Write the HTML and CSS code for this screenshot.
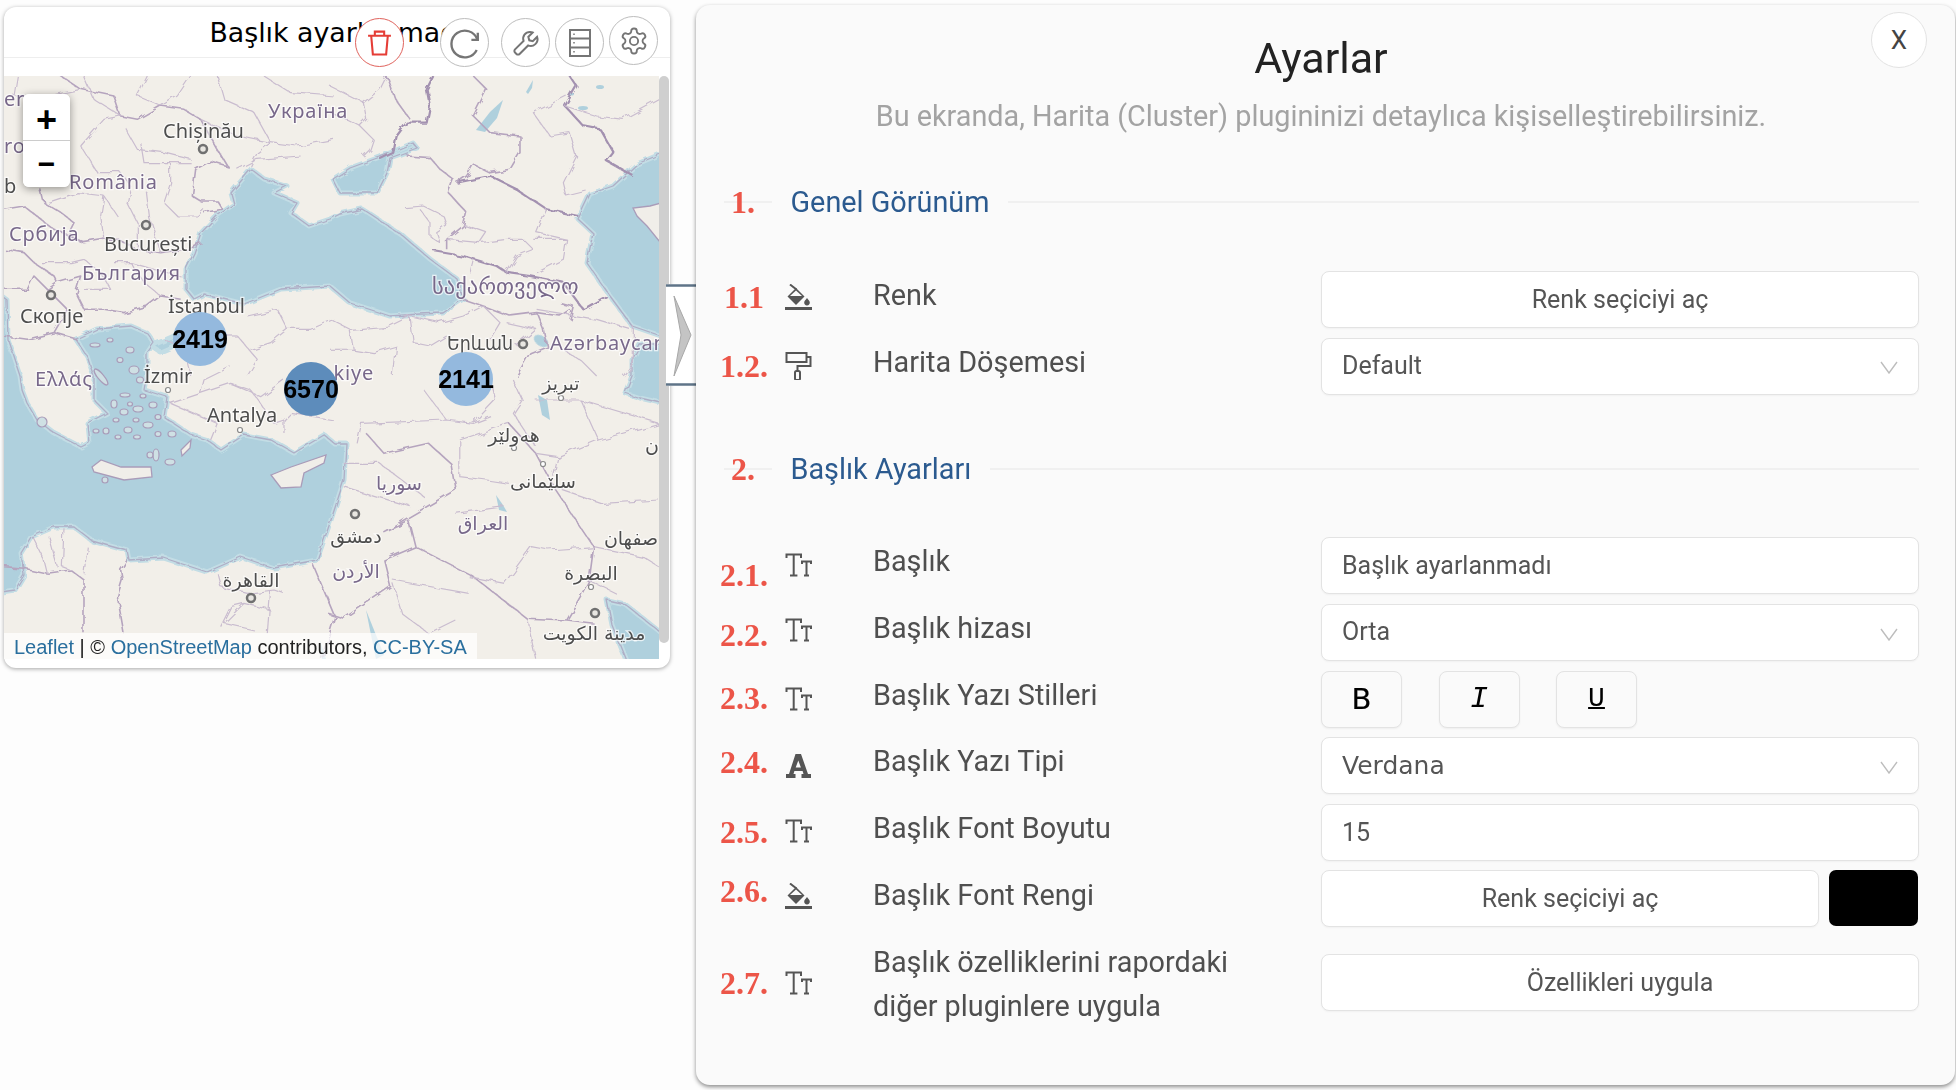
FILE: index.html
```html
<!DOCTYPE html>
<html lang="tr">
<head>
<meta charset="utf-8">
<title>Ayarlar</title>
<link rel="stylesheet" href="styles.css">
</head>
<body>
<svg class="defs" width="0" height="0" aria-hidden="true">
  <defs>
    <filter id="rough" x="-5%" y="-5%" width="110%" height="110%">
      <feTurbulence type="fractalNoise" baseFrequency="0.09" numOctaves="2" seed="4" result="n"/>
      <feDisplacementMap in="SourceGraphic" in2="n" scale="7"/>
      <feGaussianBlur stdDeviation="0.35"/>
    </filter>
    <filter id="coast" x="-5%" y="-5%" width="110%" height="110%">
      <feTurbulence type="fractalNoise" baseFrequency="0.1" numOctaves="2" seed="9" result="n"/>
      <feDisplacementMap in="SourceGraphic" in2="n" scale="5"/>
      <feGaussianBlur stdDeviation="0.3"/>
    </filter>
    <filter id="soft"><feGaussianBlur stdDeviation="0.35"/></filter>
    <path id="black-sea" d="M251 169L231 193 234 204 217 216 201 233 194 253 186 269 186 289 194 299 204 294 244 304 281 289 330 286 350 303 390 316 420 314 443 313 463 299 457 279 430 259 403 236 373 216 362 209 340 214 330 219 309 226 291 213 297 203 274 193 287 186 264 179z"/>
    <path id="azov" d="M333 179L350 168 380 157 413 143 417 148 390 158 387 173 377 193 340 193z"/>
    <path id="caspian" d="M670 150L637 164 613 186 590 194 578 219 593 233 587 263 610 296 632 326 670 339z"/>
    <path id="caspian-s" d="M670 345L640 345 632 360 632 376 625 393 640 398 670 405z"/>
    <path id="marmara" d="M151 346L181 333 188 340 160 352z"/>
    <path id="med" d="M-6 593L15 590 24 575 21 553 31 537 54 527 74 527 91 540 127 550 129 560 164 558 207 572 241 557 274 568 317 560 330 523 344 480 346 443 334 443 324 435 294 453 271 440 244 435 221 450 207 440 191 435 164 417 167 397 144 390 147 373 147 353 154 343 147 333 131 326 97 329 76 339 87 356 94 377 94 400 107 413 87 423 89 443 81 447 54 433 37 420 27 403 22 390 20 376 8 340 7 300 -6 290z"/>
    <path id="gulf" d="M607 600L625 604 670 640 670 670 630 670 612 625z"/>
    <symbol id="i-fill" viewBox="0 0 27 26">
      <path d="M5 0.5l6.5 5" fill="none" stroke="#555" stroke-width="2"/>
      <path d="M11 4l8.5 8.5L11 21 2.5 12.5z" fill="#555"/>
      <path d="M11 6.500l6 5.500H5z" fill="#fafafa"/>
      <path d="M22 14c1.600 2 2.800 3.300 2.800 4.600a2.800 2.800 0 0 1-5.600 0c0-1.300 1.200-2.600 2.800-4.600z" fill="#555"/>
      <rect x="0" y="23" width="27" height="3" fill="#555"/>
    </symbol>
    <symbol id="i-roller" viewBox="0 0 26 28">
      <rect x="1" y="1" width="20" height="9" fill="none" stroke="#555" stroke-width="2"/>
      <path d="M21 5h4v9H12v5" fill="none" stroke="#555" stroke-width="2"/>
      <rect x="9.500" y="19" width="5" height="9" rx="1.500" fill="none" stroke="#555" stroke-width="2"/>
    </symbol>
    <symbol id="i-tt" viewBox="0 0 27 24">
      <path d="M1.500 5V1.500h14.500V5M8.700 1.500V22.500M5 22.500h7.400" fill="none" stroke="#555" stroke-width="2"/>
      <path d="M17 11V8.500h9V11M21.500 8.500V22.500M19 22.500h5" fill="none" stroke="#555" stroke-width="2"/>
    </symbol>
    <symbol id="i-a" viewBox="0 0 27 24">
      <path fill="#555" fill-rule="evenodd" d="M10.500 0h5.500l7 20h3v4h-9.500v-4h2l-.9-3H9.400l-.9 3h2v4H1v-4h3zM13.300 6.500L10.700 13.500h5.200z"/>
    </symbol>
  </defs>
</svg>

<main class="page">
  <section class="map-card">
    <header class="map-head">
      <h2 class="map-title">Başlık ayarlanmadı</h2>
    </header>
    <div class="tools">
      <button class="tool tool-del" aria-label="Sil">
        <svg viewBox="0 0 26 26" width="27" height="27"><path d="M2 6.500h22M8.500 6.500V2.500h9v4M5 6.500l1.600 18h12.800L21 6.500" fill="none" stroke="#e53d36" stroke-width="2"/></svg>
      </button>
      <button class="tool tool-refresh" aria-label="Yenile">
        <svg viewBox="0 0 30 30" width="32" height="32"><path d="M26.500 11.500A12.500 12.500 0 1 0 26 21.500" fill="none" stroke="#757575" stroke-width="2.200"/><path d="M27 5.500v6.500h-6" fill="none" stroke="#757575" stroke-width="2.200"/></svg>
      </button>
      <button class="tool tool-wrench" aria-label="Araçlar">
        <svg viewBox="0 0 24 24" width="28" height="28"><path d="M15.500 2.500a5.800 5.800 0 0 0-5.600 7.700L2.600 17.500a1.900 1.900 0 0 0 0 2.700l1.200 1.200a1.900 1.900 0 0 0 2.700 0l7.300-7.300a5.800 5.800 0 0 0 7.700-7.300l-3.700 3.700-3-.8-.8-3 3.700-3.700a5.800 5.800 0 0 0-2.200-.5z" fill="none" stroke="#757575" stroke-width="1.700"/></svg>
      </button>
      <button class="tool tool-table" aria-label="Veri">
        <svg viewBox="0 0 22 28" width="22" height="28"><rect x="1" y="1" width="20" height="26" fill="none" stroke="#757575" stroke-width="2"/><path d="M1 9.500h20M1 18.500h20" stroke="#757575" stroke-width="2"/><path d="M5 4.500v1.500M5 13v1.500M5 22v1.500" stroke="#757575" stroke-width="1.500"/></svg>
      </button>
      <button class="tool tool-gear" aria-label="Ayarlar">
        <svg viewBox="0 0 24 24" width="30" height="30"><path d="M12.220 2h-.44a2 2 0 0 0-2 2v.18a2 2 0 0 1-1 1.730l-.43.25a2 2 0 0 1-2 0l-.15-.08a2 2 0 0 0-2.730.73l-.22.38a2 2 0 0 0 .73 2.730l.15.1a2 2 0 0 1 1 1.720v.51a2 2 0 0 1-1 1.740l-.15.09a2 2 0 0 0-.73 2.730l.22.38a2 2 0 0 0 2.730.73l.15-.08a2 2 0 0 1 2 0l.43.25a2 2 0 0 1 1 1.730V20a2 2 0 0 0 2 2h.44a2 2 0 0 0 2-2v-.18a2 2 0 0 1 1-1.730l.43-.25a2 2 0 0 1 2 0l.15.08a2 2 0 0 0 2.730-.73l.22-.39a2 2 0 0 0-.73-2.730l-.15-.08a2 2 0 0 1-1-1.740v-.5a2 2 0 0 1 1-1.740l.15-.09a2 2 0 0 0 .73-2.730l-.22-.38a2 2 0 0 0-2.730-.73l-.15.08a2 2 0 0 1-2 0l-.43-.25a2 2 0 0 1-1-1.730V4a2 2 0 0 0-2-2z" fill="none" stroke="#757575" stroke-width="1.500"/><circle cx="12" cy="12" r="3.300" fill="none" stroke="#757575" stroke-width="1.500"/></svg>
      </button>
    </div>
    <div class="map-body">
      <div class="map">
        <svg class="map-svg" viewBox="4 76 655 583" width="655" height="583">
          <rect x="4" y="76" width="655" height="583" fill="#f2efe9"/>

          <!-- water -->
          <g class="sea" filter="url(#coast)">
            <use href="#black-sea"/><use href="#azov"/><use href="#caspian"/><use href="#caspian-s"/><use href="#marmara"/><use href="#med"/><use href="#gulf"/>
          </g>
          <g class="sea-plain" filter="url(#soft)">
            <path d="M476 130L490 112 503 100 497 118 485 132z"/>
            <path d="M526 92L533 80 532 88 528 94z"/>
            <ellipse cx="583" cy="108" rx="5" ry="2"/>
            <ellipse cx="600" cy="87" rx="4" ry="2"/>
            <ellipse cx="571" cy="94" rx="3" ry="1.500"/>
            <ellipse cx="541" cy="341" rx="8" ry="5" transform="rotate(35 541 341)"/>
            <path d="M538 395L547 400 550 420 542 415z"/>
            <path d="M496 495L503 505 507 512 499 510z"/>
            <path d="M366 610L372 625 384 655 376 659 370 630z"/>
            <path d="M320 640L326 659 322 659z"/>
          </g>
          <g class="coast" filter="url(#coast)">
            <use href="#black-sea"/><use href="#azov"/><use href="#caspian"/><use href="#caspian-s"/><use href="#med"/><use href="#gulf"/>
          </g>

          <!-- islands -->
          <g class="isle" filter="url(#soft)">
            <path d="M92 467L101 460 121 467 151 467 152 477 124 480 94 472z"/>
            <path d="M271 475L291 467 326 455 324 463 304 473 301 487 281 488z"/>
            <path d="M181 450L191 440 190 448 182 456z"/>
            <path d="M637 216L633 208 650 206 668 201 668 252 647 226z"/>
          </g>
          <g class="islets" filter="url(#soft)">
            <ellipse cx="101" cy="377" rx="3" ry="10" transform="rotate(-40 101 377)"/>
            <ellipse cx="134" cy="370" rx="5" ry="4"/>
            <ellipse cx="130" cy="350" rx="4" ry="3"/>
            <ellipse cx="125" cy="395" rx="5" ry="2"/>
            <ellipse cx="114" cy="404" rx="3" ry="4"/>
            <ellipse cx="124" cy="412" rx="4" ry="3"/>
            <ellipse cx="138" cy="409" rx="5" ry="3"/>
            <ellipse cx="153" cy="405" rx="4" ry="3"/>
            <ellipse cx="106" cy="431" rx="3" ry="3"/>
            <ellipse cx="128" cy="430" rx="4" ry="3"/>
            <ellipse cx="148" cy="425" rx="5" ry="3"/>
            <ellipse cx="172" cy="434" rx="4" ry="3"/>
            <ellipse cx="156" cy="455" rx="3" ry="6"/>
            <ellipse cx="170" cy="462" rx="5" ry="3"/>
            <ellipse cx="42" cy="422" rx="5" ry="5"/>
            <ellipse cx="105" cy="480" rx="3" ry="3"/>
            <ellipse cx="96" cy="431" rx="3" ry="2"/>
            <ellipse cx="116" cy="420" rx="3" ry="2"/>
            <ellipse cx="136" cy="420" rx="3" ry="2"/>
            <ellipse cx="158" cy="417" rx="3" ry="2.500"/>
            <ellipse cx="118" cy="437" rx="3" ry="2"/>
            <ellipse cx="137" cy="437" rx="3.500" ry="2"/>
            <ellipse cx="158" cy="434" rx="3" ry="2.500"/>
            <ellipse cx="143" cy="396" rx="3" ry="2"/>
            <ellipse cx="130" cy="404" rx="2.500" ry="2"/>
            <ellipse cx="150" cy="455" rx="3" ry="3"/>
            <ellipse cx="140" cy="380" rx="3.500" ry="3"/>
            <ellipse cx="120" cy="360" rx="3" ry="2.500"/>
            <ellipse cx="95" cy="345" rx="5" ry="2"/>
            <ellipse cx="110" cy="340" rx="3" ry="2"/>
          </g>

          <!-- borders -->
          <g class="borders" filter="url(#rough)">
            <g transform="translate(4 76) scale(.3333)">
              <polyline points="170,0 230,40 330,60 350,120 400,130 470,90 540,100 590,130 640,220 670,270 620,255 575,280 565,360 590,375 640,375 655,400 600,410"/>
              <polyline points="200,480 240,500 300,490 340,490 400,520 470,530 540,520 590,500"/>
              <polyline points="110,340 120,380 170,410 210,440 190,480 240,500"/>
              <polyline points="160,620 230,600 215,650 240,700 300,700 360,710 430,690 470,660 530,670"/>
              <polyline points="0,520 60,530 90,560 150,600 160,620 130,640 90,600 70,640 0,640"/>
              <polyline points="0,400 60,390 110,430 150,460 200,480"/>
              <polyline points="130,640 190,700 150,770 70,790 0,780"/>
              <polyline points="150,770 220,790"/>
              <polyline class="thin" points="130,380 220,350 300,360 340,420"/>
              <polyline class="thin" points="300,360 290,420 300,490"/>
              <polyline class="thin" points="380,330 370,380 400,440 400,520"/>
              <polyline class="thin" points="430,350 440,430 470,530"/>
              <polyline class="thin" points="480,380 520,420 580,420 600,400"/>
              <polyline class="thin" points="500,260 560,260"/>
              <polyline class="thin" points="360,150 400,220 480,230 560,250"/>
              <polyline class="thin" points="410,200 420,260 500,260 500,320 480,380"/>
              <polyline class="thin" points="230,210 280,290 350,290 380,330"/>
              <polyline class="thin" points="230,210 300,130 350,120"/>
              <polyline class="thin" points="130,60 230,40"/>
              <polyline class="thin" points="640,0 660,70 750,110 800,200 760,230 740,270"/>
              <polyline class="thin" points="560,0 520,60 470,90"/>
              <polyline class="thin" points="780,0 860,50 990,60"/>
              <polyline class="thin" points="800,200 880,210 990,190"/>
              <polyline class="thin" points="700,280 760,250 890,240"/>
              <polyline class="thin" points="730,720 820,700 850,760 800,800 740,820"/>
              <polyline class="thin" points="850,760 920,760 990,730"/>
              <polyline class="thin" points="700,780 760,850 730,900"/>
              <polyline class="thin" points="480,790 540,820 560,900"/>
              <polyline class="thin" points="240,550 290,590 320,640 240,640"/>
              <polyline class="thin" points="380,560 420,620 470,660"/>
              <polyline class="thin" points="40,0 30,60 130,60"/>
              <polyline class="thin" points="240,0 270,70 350,120"/>
              <polyline class="thin" points="430,0 400,60 470,90"/>
              <polyline class="thin" points="590,130 700,180 800,200"/>
              <polyline class="thin" points="110,560 200,560 240,550"/>
              <polyline class="thin" points="330,560 380,560 450,580 530,600"/>
              <polyline class="thin" points="640,780 700,780"/>
            </g>
            <g transform="translate(330 76) scale(.3333)">
              <polyline class="thick" points="310,0 290,40 300,90 290,140 230,140 200,180 190,230 150,250"/>
              <polyline points="170,0 190,60 240,130"/>
              <polyline class="thin" points="0,30 60,60 100,80 150,40 170,0"/>
              <polyline class="thin" points="100,80 110,130 90,150 130,190 120,220 100,240"/>
              <polyline class="thin" points="0,110 50,130 90,150"/>
              <polyline points="230,240 300,245 330,280 370,310 355,350 410,410 400,450 350,490 350,520"/>
              <polyline class="thick" points="380,320 480,300 560,340 650,400 745,420"/>
              <polyline points="430,0 470,40 430,120 480,170 570,180 570,230 540,280 480,290 430,265 410,300 380,320"/>
              <polyline class="thin" points="650,400 620,470 710,490 700,550 620,590"/>
              <polyline class="thick" points="720,0 740,30 705,90 760,150 810,160 850,230 830,255 910,300"/>
              <polyline class="thin" points="705,90 800,120 880,130 990,70"/>
              <polyline class="thin" points="720,170 660,180 610,110 710,60"/>
              <polyline class="thin" points="720,170 740,240 700,320 710,360 770,345"/>
              <polyline class="thin" points="225,395 280,390 340,420 350,450 320,470 330,500 300,480 300,440 270,400"/>
              <polyline class="thick" points="310,525 400,540 500,570 530,590 600,600 700,620 760,700 830,660"/>
              <polyline class="thin" points="450,500 530,490 580,490 610,520 560,540 530,590"/>
              <polyline class="thin" points="610,490 710,490"/>
              <polyline class="thin" points="350,490 450,500 470,470 400,445"/>
              <polyline class="thin" points="420,590 430,550"/>
              <polyline points="400,670 460,690 540,720 620,710 690,720 720,700"/>
              <polyline points="690,680 730,690 720,730"/>
              <polyline points="620,710 640,760 650,810 600,830 560,900"/>
              <polyline class="thin" points="800,730 900,760"/>
              <polyline class="thin" points="910,750 910,860 880,900"/>
              <polyline class="thin" points="620,700 800,730"/>
              <polyline class="thin" points="0,730 60,760 180,750 240,720 330,740"/>
              <polyline class="thin" points="60,760 70,820 130,830 200,810 190,900"/>
              <polyline class="thin" points="240,720 250,800 300,810 350,780"/>
              <polyline class="thin" points="330,740 400,720 460,690 510,740 480,790"/>
              <polyline class="thin" points="0,820 70,820"/>
              <polyline class="thin" points="700,820 760,860 800,900"/>
              <polyline class="thin" points="530,740 620,760 560,810"/>
            </g>
            <g transform="translate(4 360) scale(.3333)">
              <polyline class="thin" points="500,130 590,100 680,70 770,110 840,60"/>
              <polyline class="thin" points="590,100 600,60 680,20"/>
              <polyline class="thin" points="680,70 740,90 770,130 810,190 840,180 840,220"/>
              <polyline class="thin" points="500,130 570,160 640,190"/>
              <polyline class="thin" points="840,180 860,160 930,170 990,180"/>
              <polyline class="thin" points="640,190 620,240"/>
              <polyline points="0,620 60,625 130,640 200,630 240,660 240,820"/>
              <polyline class="thin" points="85,530 120,600 130,640"/>
              <polyline class="thin" points="135,530 160,620"/>
              <polyline class="thin" points="180,505 175,620 200,630"/>
              <polyline class="thin" points="250,560 240,640"/>
              <polyline points="370,600 350,630 355,660 340,710 360,820"/>
              <polyline class="thin" points="640,640 650,680 730,700 810,690 840,700"/>
              <polyline class="thin" points="650,800 680,740 720,730 800,750"/>
              <polyline class="thin" points="720,730 660,790 750,810"/>
              <polyline class="thin" points="800,690 790,820"/>
            </g>
            <g transform="translate(0 380) scale(.4464 .3333)">
              <polyline class="thin" points="800,190 810,130 1000,120 1060,130 1100,110"/>
              <polyline points="820,160 860,220 960,190 1010,250 1020,330 860,455 915,420 930,500 1060,590 1180,715 1270,720 1330,730"/>
              <polyline class="thin" points="1030,180 1030,290 1090,300 1140,310"/>
              <polyline points="930,500 860,540 875,620 770,715 735,700"/>
              <polyline points="700,550 750,710 720,836"/>
              <polyline class="thin" points="1180,715 1200,836"/>
              <polyline points="1140,130 1200,220 1240,320 1330,500 1320,600 1300,650 1270,720"/>
              <polyline class="thin" points="1200,220 1250,230 1240,290"/>
              <polyline class="thin" points="1240,320 1350,370 1476,360"/>
              <polyline class="thin" points="1330,500 1440,530 1476,560"/>
              <polyline class="thin" points="1320,600 1380,640"/>
              <polyline class="thin" points="1150,0 1170,60 1150,100 1200,200"/>
              <polyline class="thin" points="1200,60 1300,60 1476,130"/>
              <polyline class="thin" points="1300,60 1340,180 1476,130"/>
              <polyline class="thin" points="1340,180 1250,230"/>
              <polyline class="thin" points="1030,180 1140,130"/>
              <polyline class="thin" points="1130,610 1190,500 1230,510 1330,500"/>
              <polyline class="thin" points="1050,590 1130,610"/>
              <polyline class="thin" points="880,600 1050,640"/>
              <polyline class="thin" points="770,250 850,250 950,350"/>
              <polyline class="thin" points="770,320 920,380"/>
              <polyline class="thin" points="1020,400 1130,380"/>
              <polyline class="thin" points="1100,0 1110,60 1060,130"/>
              <polyline class="thin" points="950,30 1000,120"/>
              <polyline class="thin" points="880,610 900,700 960,760 1020,720"/>
            </g>
          </g>

          <!-- place labels -->
          <g class="places">
            <g class="city-dots">
              <circle cx="203" cy="149" r="4"/><circle cx="146" cy="225" r="4"/><circle cx="51" cy="295" r="4"/>
              <circle cx="523" cy="344" r="4"/><circle cx="355" cy="514" r="4"/><circle cx="251" cy="598" r="4"/><circle cx="595" cy="613" r="4"/>
            </g>
            <g class="town-dots">
              <circle cx="168" cy="390" r="2.500"/><circle cx="240" cy="430" r="2.500"/><circle cx="514" cy="448" r="2.500"/>
              <circle cx="543" cy="464" r="2.500"/><circle cx="591" cy="587" r="2.500"/><circle cx="561" cy="398" r="2.500"/>
            </g>
            <text class="country" x="268" y="118">Україна</text>
            <text class="city" x="163" y="138">Chișinău</text>
            <text class="country" x="69" y="189">România</text>
            <text class="country" x="9" y="241">Србија</text>
            <text class="city" x="104" y="251">București</text>
            <text class="country" x="82" y="280">България</text>
            <text class="city" x="168" y="313">İstanbul</text>
            <text class="city" x="20" y="323">Скопје</text>
            <text class="country" x="35" y="386">Ελλάς</text>
            <text class="city" x="144" y="383">İzmir</text>
            <text class="city" x="207" y="422">Antalya</text>
            <text class="country" x="374" y="380" text-anchor="end">kiye</text>
            <text class="city" x="447" y="350" textLength="66" lengthAdjust="spacingAndGlyphs">Երևան</text>
            <text class="country" x="550" y="350">Azərbaycan</text>
            <text class="geo" x="432" y="294">საქართველო</text>
            <text class="country" x="4" y="106">er</text>
            <text class="country" x="4" y="153">ro</text>
            <text class="city" x="4" y="193">b</text>
            <text class="arab" x="561" y="390" text-anchor="middle">تبریز</text>
            <text class="arab" x="514" y="442" text-anchor="middle">هەولێر</text>
            <text class="arab" x="543" y="488" text-anchor="middle">سلێمانی</text>
            <text class="arab country-ar" x="399" y="490" text-anchor="middle">سوریا</text>
            <text class="arab country-ar" x="483" y="530" text-anchor="middle">العراق</text>
            <text class="arab" x="356" y="543" text-anchor="middle">دمشق</text>
            <text class="arab country-ar" x="356" y="578" text-anchor="middle">الأردن</text>
            <text class="arab" x="251" y="587" text-anchor="middle">القاهرة</text>
            <text class="arab" x="631" y="545" text-anchor="middle">صفهان</text>
            <text class="arab" x="591" y="580" text-anchor="middle">البصرة</text>
            <text class="arab" x="594" y="640" text-anchor="middle">مدينة الكويت</text>
            <text class="arab" x="652" y="452" text-anchor="middle">ن</text>
          </g>
        </svg>

        <div class="zoom-ctl">
          <button class="zoom-btn zoom-in">+</button>
          <button class="zoom-btn zoom-out">−</button>
        </div>
        <div class="cluster cluster-a">2419</div>
        <div class="cluster cluster-b">6570</div>
        <div class="cluster cluster-c">2141</div>
        <div class="attribution"><a>Leaflet</a> | © <a>OpenStreetMap</a> contributors, <a>CC-BY-SA</a></div>
      </div>
      <div class="scrollbar"><div class="scroll-thumb"></div></div>
    </div>
  </section>

  <div class="handle" aria-hidden="true">
    <svg viewBox="0 0 34 102" width="34" height="102">
      <path d="M0 1.500h34M0 100.500h34" stroke="#5f7488" stroke-width="2.400" fill="none"/>
      <path d="M8 12L25 51 8 92 15 51z" fill="#c4c4c4" stroke="#a8a8a8" stroke-width="1"/>
    </svg>
  </div>

  <section class="panel">
    <button class="close">X</button>
    <h1 class="panel-title">Ayarlar</h1>
    <p class="panel-sub">Bu ekranda, Harita (Cluster) plugininizi detaylıca kişiselleştirebilirsiniz.</p>

    <div class="divider divider-first">
      <span class="divider-lead"><b class="divider-num">1.</b></span>
      <span class="divider-text">Genel Görünüm</span>
      <span class="divider-rest"></span>
    </div>
    <div class="rows rows-first">
      <div class="row">
        <span class="num drop-4">1.1</span>
        <svg class="icon drop-13"><use href="#i-fill"/></svg>
        <span class="label">Renk</span>
        <button class="field field-btn">Renk seçiciyi aç</button>
      </div>
      <div class="row">
        <span class="num drop-6">1.2.</span>
        <svg class="icon icon-tall drop-14"><use href="#i-roller"/></svg>
        <span class="label">Harita Döşemesi</span>
        <div class="field field-select"><span>Default</span><svg class="chev" viewBox="0 0 18 13"><path d="M1 1l8 11 8-11" fill="none" stroke="#bdbdbd" stroke-width="1.400"/></svg></div>
      </div>
    </div>

    <div class="divider divider-second">
      <span class="divider-lead"><b class="divider-num">2.</b></span>
      <span class="divider-text">Başlık Ayarları</span>
      <span class="divider-rest"></span>
    </div>
    <div class="rows rows-second">
      <div class="row">
        <span class="num drop-16">2.1.</span>
        <svg class="icon drop-16"><use href="#i-tt"/></svg>
        <span class="label">Başlık</span>
        <div class="field field-input">Başlık ayarlanmadı</div>
      </div>
      <div class="row">
        <span class="num drop-9">2.2.</span>
        <svg class="icon drop-14"><use href="#i-tt"/></svg>
        <span class="label">Başlık hizası</span>
        <div class="field field-select"><span>Orta</span><svg class="chev" viewBox="0 0 18 13"><path d="M1 1l8 11 8-11" fill="none" stroke="#bdbdbd" stroke-width="1.400"/></svg></div>
      </div>
      <div class="row">
        <span class="num drop-5">2.3.</span>
        <svg class="icon drop-16"><use href="#i-tt"/></svg>
        <span class="label">Başlık Yazı Stilleri</span>
        <div class="style-btns">
          <button class="style-btn style-b">B</button>
          <button class="style-btn style-i">I</button>
          <button class="style-btn style-u">U</button>
        </div>
      </div>
      <div class="row">
        <span class="num drop-3">2.4.</span>
        <svg class="icon drop-17"><use href="#i-a"/></svg>
        <span class="label">Başlık Yazı Tipi</span>
        <div class="field field-select field-verdana"><span>Verdana</span><svg class="chev" viewBox="0 0 18 13"><path d="M1 1l8 11 8-11" fill="none" stroke="#bdbdbd" stroke-width="1.400"/></svg></div>
      </div>
      <div class="row">
        <span class="num drop-6">2.5.</span>
        <svg class="icon drop-15"><use href="#i-tt"/></svg>
        <span class="label">Başlık Font Boyutu</span>
        <div class="field field-input">15</div>
      </div>
      <div class="row">
        <span class="num lift-1">2.6.</span>
        <svg class="icon drop-13"><use href="#i-fill"/></svg>
        <span class="label label-low">Başlık Font Rengi</span>
        <div class="color-pair">
          <button class="field field-btn">Renk seçiciyi aç</button>
          <span class="swatch"></span>
        </div>
      </div>
      <div class="row row-last">
        <span class="num drop-22">2.7.</span>
        <svg class="icon drop-32"><use href="#i-tt"/></svg>
        <span class="label label-two">Başlık özelliklerini rapordaki<br>diğer pluginlere uygula</span>
        <button class="field field-btn field-center">Özellikleri uygula</button>
      </div>
    </div>
  </section>
</main>
</body>
</html>
```
FILE: styles.css
```css
* { box-sizing: border-box; }
html, body { margin: 0; padding: 0; }
body { width: 1956px; height: 1090px; background: #fdfdfd; overflow: hidden; font-family: Roboto, "Noto Sans", sans-serif; }
button { font: inherit; margin: 0; }
.defs { display: block; width: 0; height: 0; }

.page { display: flex; align-items: flex-start; position: relative; width: 1956px; height: 1090px; }

/* map card */
.map-card { position: relative; width: 666px; height: 661px; margin: 7px 0 0 4px; background: #fff; border-radius: 12px; box-shadow: 0 1px 4px rgba(0,0,0,.35); }
.map-head { height: 51px; border-bottom: 1px solid #eeeeee; display: flex; justify-content: center; }
.map-title { margin: 0; padding-top: 1px; font: 400 26.800px/50px "DejaVu Sans", Verdana, sans-serif; color: #000; }
.tools { position: absolute; inset: 0 0 auto 0; }
.tool { position: absolute; width: 49px; height: 49px; padding: 0; border-radius: 50%; border: 1.5px solid #bdbdbd; background: #fff; display: flex; align-items: center; justify-content: center; }
.tool-del { left: 351px; top: 11px; border-color: #e0635d; }
.tool-refresh { left: 436px; top: 11px; }
.tool-wrench { left: 497px; top: 11px; }
.tool-table { left: 551px; top: 11px; }
.tool-gear { left: 605px; top: 9px; }

.map-body { display: flex; margin-top: 18px; height: 592px; }
.map { position: relative; width: 655px; height: 583px; overflow: hidden; }
.map-svg { display: block; }
.scrollbar { width: 11px; height: 567px; }
.scroll-thumb { width: 10px; height: 100%; background: #cfcfcf; border-radius: 5px; }

.sea { fill: #afd0dd; stroke: #c3dde5; stroke-width: 5; stroke-linejoin: round; }
.sea-plain { fill: #afd0dd; }
.coast { fill: none; stroke: #a89ebb; stroke-width: 1.3; stroke-linejoin: round; opacity: .75; }
.isle { fill: #f0eee9; stroke: #a99cb9; stroke-width: 1.3; }
.islets { fill: #cfe0e4; stroke: #a99cb9; stroke-width: 1.2; }
.borders { fill: none; }
.borders polyline { fill: none; stroke: #b5a4be; stroke-width: 1.6; vector-effect: non-scaling-stroke; stroke-linejoin: round; }
.borders polyline.thin { stroke: #c9bccf; stroke-width: 1.2; }
.borders polyline.thick { stroke: #a391b0; stroke-width: 2.2; }

.places text { font-family: "Noto Sans", "DejaVu Sans", sans-serif; font-size: 20px; paint-order: stroke; stroke: rgba(255,255,255,.7); stroke-width: 2.5px; filter: url(#soft); }
.places .country { fill: #78688a; letter-spacing: .8px; }
.places .city { fill: #4e4e4e; }
.places .geo { fill: #78688a; font-family: "DejaVu Sans", sans-serif; font-size: 22.500px; }
.places .arab { fill: #4e4e4e; font-family: "DejaVu Sans", sans-serif; font-size: 19px; }
.places .country-ar { fill: #78688a; }
.city-dots circle { fill: #e8e6e1; stroke: #707070; stroke-width: 2.5; }
.town-dots circle { fill: #fff; stroke: #8a8a8a; stroke-width: 1.2; }

.zoom-ctl { position: absolute; left: 19px; top: 18px; width: 47px; border-radius: 6px; overflow: hidden; background: #fff; box-shadow: 0 2px 8px rgba(0,0,0,.4); }
.zoom-btn { display: block; width: 47px; height: 46.500px; padding: 0; border: 0; background: #fff; color: #000; font: 700 36px/46px "Liberation Mono", monospace; }
.zoom-in { border-bottom: 1px solid #ccc; padding-top: 6px; }
.zoom-out { font: 700 30px/46px "Liberation Sans", sans-serif; }

.cluster { position: absolute; width: 54px; height: 54px; border-radius: 50%; display: flex; align-items: center; justify-content: center; font: 700 25px/1 "Liberation Sans", Arial, sans-serif; color: #000; background: #94b9de; white-space: nowrap; }
.cluster-a { left: 169px; top: 236px; }
.cluster-b { left: 280px; top: 286px; background: #5d8cbb; }
.cluster-c { left: 435px; top: 276px; }

.attribution { position: absolute; left: 0; bottom: 0; width: 473px; height: 26px; padding: 1px 0 0 10px; background: rgba(255,255,255,.72); font: 400 20px/26px "Liberation Sans", Arial, sans-serif; color: #222; white-space: nowrap; }
.attribution a { color: #2a6f9e; }

/* collapse handle */
.handle { position: absolute; left: 666px; top: 284px; width: 34px; height: 102px; background: #fff; line-height: 0; }

/* settings panel */
.panel { position: relative; width: 1259px; height: 1080px; margin: 5px 0 0 26px; padding-right: 9px; background: #fafafa; border-radius: 14px; box-shadow: 0 2px 4px rgba(0,0,0,.45); }
.close { position: absolute; left: 1175px; top: 7px; width: 56px; height: 56px; padding: 0; border-radius: 50%; border: 1px solid #e2e2e2; background: #fff; color: #444; font: 400 26px/1 Roboto, sans-serif; }
.panel-title { margin: 0; padding-top: 28px; text-align: center; font: 400 43px/50px Roboto, sans-serif; color: #222; }
.panel-sub { margin: 13px 0 0; text-align: center; font: 400 28.800px/40px Roboto, sans-serif; color: #a3a3a3; }

.divider { display: flex; align-items: center; height: 44px; width: 1195px; margin-left: 28px; gap: 18.500px; }
.divider-first { margin-top: 44px; }
.divider-second { margin-top: 43px; }
.divider-lead { position: relative; width: 48px; height: 2px; background: #f0f0f0; }
.divider-num { position: absolute; left: 7px; top: -21px; font: 700 32px/44px "Liberation Serif", serif; color: #ec5548; }
.divider-text { font: 400 28.800px/44px Roboto, sans-serif; color: #2b5a8f; white-space: nowrap; }
.divider-rest { flex: 1; height: 2px; background: #f0f0f0; }

.rows { padding-left: 24px; }
.rows-first { margin-top: 47px; }
.rows-second { margin-top: 46.300px; }
.row { display: grid; grid-template-columns: 65px 88px 448px 598px; height: 66.600px; align-items: start; }
.row-last { height: 88px; margin-top: 1.500px; align-items: start; }

.num { display: block; width: 48px; text-align: center; font: 700 32px/44px "Liberation Serif", serif; color: #ec5548; white-space: nowrap; }
.icon { display: block; width: 27px; height: 24px; }
.icon-tall { height: 28px; }
.label { padding-top: 2px; font: 400 28.800px/44px Roboto, sans-serif; color: #4f4f4f; white-space: nowrap; }
.label-low { padding-top: 3px; }
.label-two { padding-top: 1px; line-height: 44px; }
.drop-3 { margin-top: 3px; } .drop-4 { margin-top: 4px; } .drop-5 { margin-top: 5px; } .drop-6 { margin-top: 6px; }
.drop-9 { margin-top: 9px; } .drop-13 { margin-top: 13px; } .drop-14 { margin-top: 14px; } .drop-15 { margin-top: 15px; }
.drop-16 { margin-top: 16px; } .drop-17 { margin-top: 17px; } .drop-22 { margin-top: 22px; } .drop-32 { margin-top: 32px; }
.lift-1 { margin-top: -1px; }
.drop-13.icon { height: 26px; }

.field { display: block; width: 100%; height: 57px; padding: 0 20px; border: 1px solid #e3e3e3; border-radius: 8px; background: #fff; color: #555; font: 400 25px/55px Roboto, sans-serif; text-align: left; box-shadow: 0 1px 2px rgba(0,0,0,.04); white-space: nowrap; }
.field-btn { text-align: center; }
.field-select { display: flex; justify-content: space-between; align-items: center; }
.field-select span { margin-top: -2px; }
.field-verdana span { margin-top: 0; font-family: "DejaVu Sans", Verdana, sans-serif; font-size: 25px; }
.chev { width: 18px; height: 13px; margin: 3px 0 0 0; }
.field-center { margin-top: 15.500px; }

.style-btns { display: flex; gap: 36.500px; }
.style-btn { width: 81px; height: 57px; padding: 0; border: 1px solid #e3e3e3; border-radius: 8px; background: #fafafa; color: #000; box-shadow: 0 1px 2px rgba(0,0,0,.05); }
.style-b { font: 400 29px/1 "DejaVu Sans", sans-serif; -webkit-text-stroke: .2px #000; }
.style-i { font: italic 400 30px/1 "Liberation Mono", monospace; }
.style-u { font: 400 28px/1 "Liberation Mono", monospace; text-decoration: underline; text-decoration-thickness: 1.500px; }

.color-pair { display: flex; gap: 10px; margin-right: 1px; }
.color-pair .field { flex: 1; width: auto; }
.swatch { width: 89px; height: 56px; background: #000; border-radius: 7px; }
```
